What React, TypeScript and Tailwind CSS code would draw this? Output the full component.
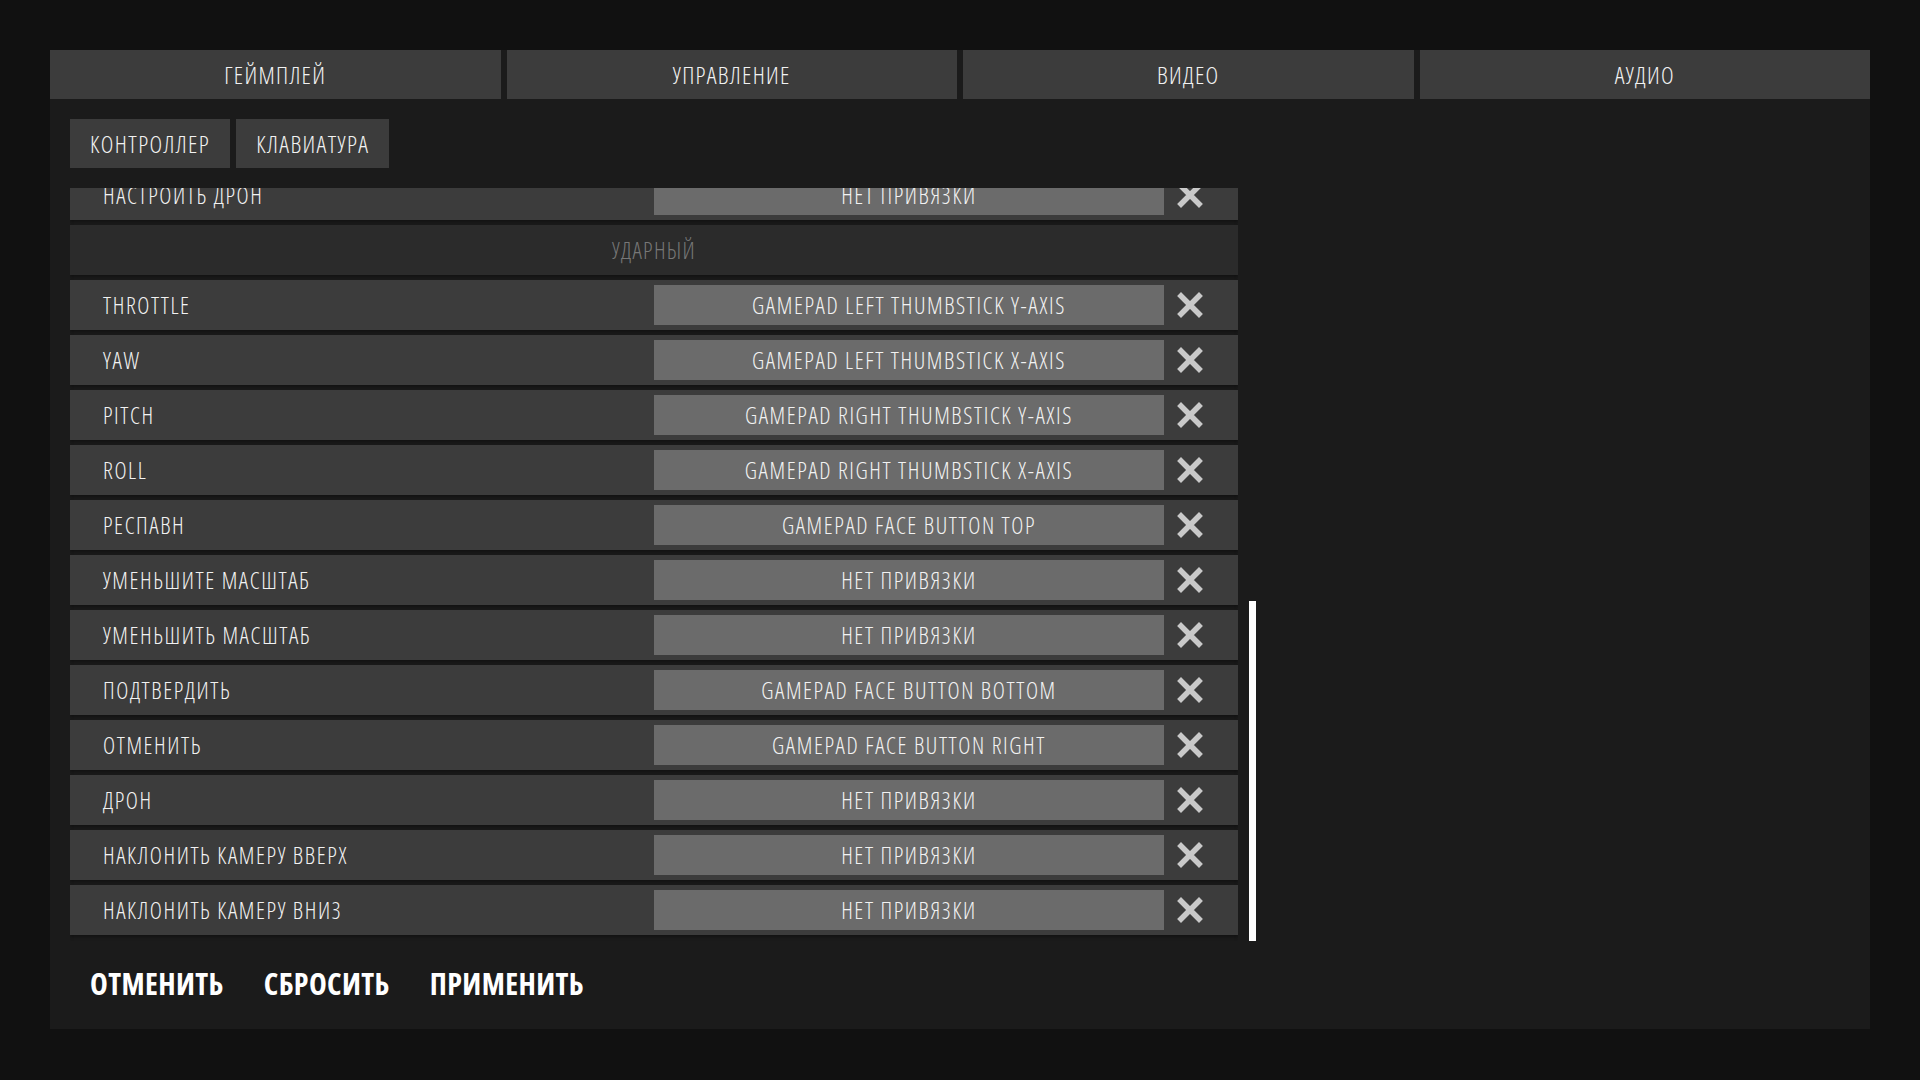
const tabs = ['ГЕЙМПЛЕЙ', 'УПРАВЛЕНИЕ', 'ВИДЕО', 'АУДИО']

type Row = { kind: 'bind'; label: string; value: string } | { kind: 'header'; label: string }

const rows: Row[] = [
  { kind: 'bind', label: 'НАСТРОИТЬ ДРОН', value: 'НЕТ ПРИВЯЗКИ' },
  { kind: 'header', label: 'УДАРНЫЙ' },
  { kind: 'bind', label: 'THROTTLE', value: 'GAMEPAD LEFT THUMBSTICK Y-AXIS' },
  { kind: 'bind', label: 'YAW', value: 'GAMEPAD LEFT THUMBSTICK X-AXIS' },
  { kind: 'bind', label: 'PITCH', value: 'GAMEPAD RIGHT THUMBSTICK Y-AXIS' },
  { kind: 'bind', label: 'ROLL', value: 'GAMEPAD RIGHT THUMBSTICK X-AXIS' },
  { kind: 'bind', label: 'РЕСПАВН', value: 'GAMEPAD FACE BUTTON TOP' },
  { kind: 'bind', label: 'УМЕНЬШИТЕ МАСШТАБ', value: 'НЕТ ПРИВЯЗКИ' },
  { kind: 'bind', label: 'УМЕНЬШИТЬ МАСШТАБ', value: 'НЕТ ПРИВЯЗКИ' },
  { kind: 'bind', label: 'ПОДТВЕРДИТЬ', value: 'GAMEPAD FACE BUTTON BOTTOM' },
  { kind: 'bind', label: 'ОТМЕНИТЬ', value: 'GAMEPAD FACE BUTTON RIGHT' },
  { kind: 'bind', label: 'ДРОН', value: 'НЕТ ПРИВЯЗКИ' },
  { kind: 'bind', label: 'НАКЛОНИТЬ КАМЕРУ ВВЕРХ', value: 'НЕТ ПРИВЯЗКИ' },
  { kind: 'bind', label: 'НАКЛОНИТЬ КАМЕРУ ВНИЗ', value: 'НЕТ ПРИВЯЗКИ' },
]

function ClearIcon() {
  return (
    <svg viewBox="0 0 26 26" className="h-[26px] w-[26px]">
      <path d="M4 4 L22 22 M22 4 L4 22" stroke="#c9c9c9" strokeWidth="5.5" strokeLinecap="square" />
    </svg>
  )
}

export default function App() {
  return (
    <div className="h-[1080px] w-full overflow-hidden bg-[#111111] pl-[50px] pt-[50px] font-['Open_Sans',sans-serif] font-light font-stretch-[75%] text-[#f2f2f2]">
      <div className="flex h-[979px] w-[1820px] flex-col bg-[#1b1b1b]">
        <div className="flex gap-[6px]">
          {tabs.map((tab) => (
            <div key={tab} className="flex h-[49px] flex-1 items-center justify-center bg-[#3c3c3c] text-[24px] tracking-[1.3px]">
              {tab}
            </div>
          ))}
        </div>

        <div className="flex gap-[6px] pl-[20px] pt-[20px]">
          <div className="flex h-[49px] items-center bg-[#3c3c3c] px-[20px] text-[24px] tracking-[1.4px]">КОНТРОЛЛЕР</div>
          <div className="flex h-[49px] items-center bg-[#3c3c3c] px-[20px] text-[24px] tracking-[1.4px]">КЛАВИАТУРА</div>
        </div>

        <div className="mt-[20px] flex h-[753px] gap-[11px] pl-[20px]">
          <div className="flex w-[1168px] shrink-0 flex-col justify-end gap-[5px] overflow-hidden pb-[6px] shadow-[inset_0_8px_8px_-6px_rgba(0,0,0,0.5)]">
            {rows.map((row) =>
              row.kind === 'header' ? (
                <div key={row.label} className="flex h-[50px] shrink-0 items-center justify-center bg-[#2b2b2b] text-[23px] tracking-[1.3px] text-[#777777] shadow-[0_2px_3px_rgba(0,0,0,0.35)]">
                  {row.label}
                </div>
              ) : (
                <div key={row.label} className="flex h-[50px] shrink-0 items-center bg-[#3c3c3c] text-[23px] tracking-[1.6px] shadow-[0_2px_3px_rgba(0,0,0,0.35)]">
                  <div className="flex-1 pl-[33px]">{row.label}</div>
                  <div className="flex h-[40px] w-[510px] items-center justify-center bg-[#6b6b6b]">{row.value}</div>
                  <div className="ml-[13px] flex w-[61px] items-center">
                    <ClearIcon />
                  </div>
                </div>
              ),
            )}
          </div>
          <div className="flex w-[7px] flex-col justify-end">
            <div className="h-[340px] bg-white" />
          </div>
        </div>

        <div className="flex pl-[20px] pt-[12px]">
          {['ОТМЕНИТЬ', 'СБРОСИТЬ', 'ПРИМЕНИТЬ'].map((label) => (
            <button key={label} className="px-[20px] py-[8px] text-[30px] font-bold tracking-[0.4px] text-white">
              {label}
            </button>
          ))}
        </div>
      </div>
    </div>
  )
}
